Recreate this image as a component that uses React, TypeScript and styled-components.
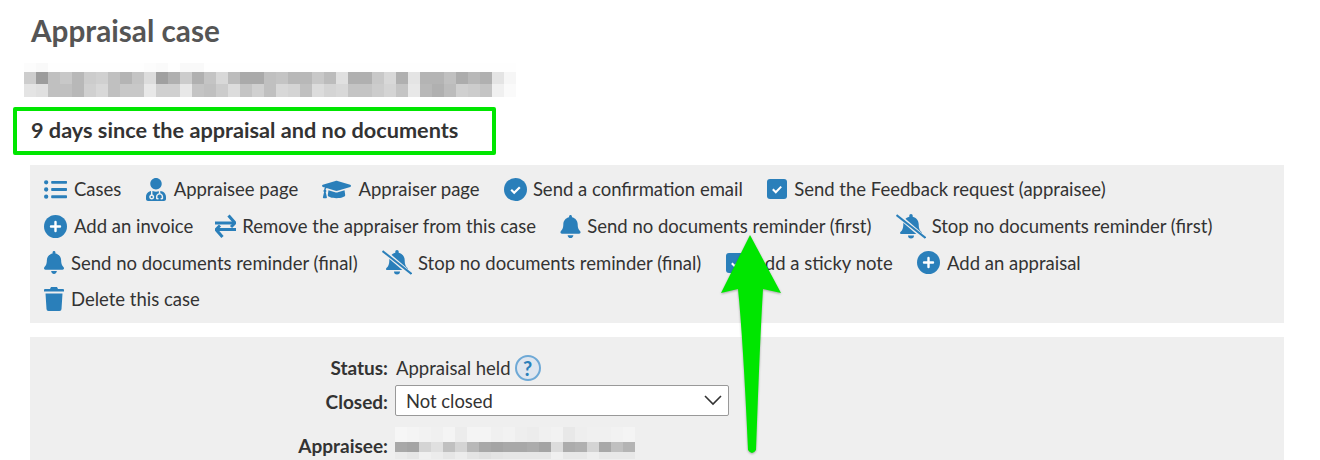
import React from "react";
import styled, { createGlobalStyle } from "styled-components";
import { FaListUl, FaUserMd, FaGraduationCap, FaBell } from "react-icons/fa";

const Global = createGlobalStyle`
  html, body { margin: 0; padding: 0; background: #fff; }
  body { width: 1320px; height: 460px; overflow: hidden; font-family: "Lato", "Liberation Sans", sans-serif; color: #333; }
`;

const Page = styled.div`
  position: relative;
  width: 1320px;
  height: 460px;
  overflow: hidden;
  padding: 0 36px 0 30px;
  box-sizing: border-box;
`;

const Title = styled.h1`
  margin: 0 0 0 1px;
  padding-top: 14px;
  font-size: 29.7px;
  line-height: 34px;
  font-weight: 700;
  color: #555;
`;

const Mosaic = styled.div`
  margin-left: -6px;
  margin-top: 15px;
`;

const Notice = styled.h2`
  position: relative;
  margin: 19px 0 0 1px;
  font-size: 21.7px;
  line-height: 28px;
  font-weight: 700;
  color: #333;
`;

const NoticeFrame = styled.span`
  position: absolute;
  left: -18px;
  top: -9px;
  width: 483px;
  height: 48px;
  box-sizing: border-box;
  border: 4px solid #00e600;
  border-radius: 2px;
`;

const Toolbar = styled.div`
  display: flex;
  flex-wrap: wrap;
  align-items: center;
  margin-top: 21px;
  padding: 6px 34px 5px 14px;
  background: #efefef;
`;

const Action = styled.a<{ $after: number }>`
  display: inline-flex;
  align-items: center;
  height: 36.7px;
  margin-right: ${(p) => p.$after}px;
  font-size: 18.5px;
  color: #333;
  white-space: nowrap;
`;

const IconSlot = styled.span<{ $w: number; $gap: number }>`
  display: inline-flex;
  align-items: center;
  justify-content: center;
  width: ${(p) => p.$w}px;
  margin-right: ${(p) => p.$gap}px;
  color: #2a7fba;
  font-size: 23px;
`;

const FormPanel = styled.div`
  margin-top: 14px;
  padding: 16px 0 0;
  height: 140px;
  background: #efefef;
  display: grid;
  grid-template-columns: 358px 1fr;
  column-gap: 8px;
  align-content: start;
`;

const Label = styled.div`
  text-align: right;
  font-size: 19px;
  font-weight: 700;
  line-height: 30px;
  color: #333;
`;

const ClosedLabel = styled(Label)`
  margin-top: 4px;
`;

const Value = styled.div`
  display: flex;
  align-items: center;
  font-size: 18.5px;
  line-height: 30px;
  height: 30px;
  color: #333;
`;

const Help = styled.span`
  display: inline-flex;
  align-items: center;
  justify-content: center;
  width: 26px;
  height: 26px;
  margin-left: 4px;
  box-sizing: border-box;
  border: 2px solid #6ea9d6;
  border-radius: 50%;
  background: #dfe6ef;
  color: #2a7fba;
  font-size: 20px;
  font-weight: 700;
`;

const SelectWrap = styled.div`
  position: relative;
  width: 334px;
  height: 31px;
  margin: 2px 0 0 -1px;
`;

const Select = styled.select`
  appearance: none;
  display: block;
  width: 100%;
  height: 100%;
  box-sizing: border-box;
  padding: 2px 10px 0;
  font: 18.4px "Lato", "Liberation Sans", sans-serif;
  color: #333;
  background: #fff;
  border: 1px solid #999;
  border-radius: 2px;
`;

const Chevron = styled.svg`
  position: absolute;
  right: 7px;
  top: 10px;
  pointer-events: none;
`;

const AppraiseeLabel = styled(Label)`
  margin-top: 14px;
`;

const AppraiseeValue = styled.div`
  margin-top: 10px;
  margin-left: -1px;
`;

const Arrow = styled.svg`
  position: absolute;
  left: 712px;
  top: 228px;
  filter: drop-shadow(0 1px 1px rgba(0, 0, 0, 0.3));
`;

const row1 = "cd 9c c0 c8 b8 cc d0 c0 b4 c4 dc a0 b0 cc b0 c4 d8 bc aa aa c0 c4 b8 b8 c8 bc e0 b0 b0 c8 d8 b0 e4 b4 b4 c0 ac b8 b0 e4 f6".split(" ");
const row2 = "e4 e0 c0 c0 b8 d0 d8 c0 c8 c8 e8 d0 d0 e8 c4 c0 cc dc c4 d0 c0 d8 d4 c0 dc d4 d8 c4 c4 cc d4 c4 e8 b8 b0 bc d0 cc c4 f0 fa".split(" ");
const row0 = "fc f9 fe fe fe fe fe fe fe fe fc fa fe f9 f9 fe fe fe fe fe fe fe fe fe fe fe fe fe fe fe fe fe fe fe fe fe fe fe fe fe fe".split(" ");

const app0 = "f6 f4 f2 f0 f4 ec f4 f4 f0 f2 ee ec f0 f2 e8 ee f0 f0 f2 f4".split(" ");
const app1 = "a8 a4 d4 e0 c0 d4 b8 a8 a4 a8 a8 ac a4 dc ac b0 d4 a8 c0 b4".split(" ");
const app2 = "ea e6 f0 ec e6 ec e4 e0 e4 e6 e6 e6 e6 f0 e8 e8 ee e8 e8 e8".split(" ");

function Cells({ rows, cell, heights }: { rows: string[][]; cell: number; heights: number[] }) {
  let y = 0;
  const h = heights.reduce((a, b) => a + b, 0);
  return (
    <svg width={rows[0].length * cell} height={h} style={{ display: "block" }} shapeRendering="crispEdges">
      {rows.map((r, i) => {
        const top = y;
        y += heights[i];
        return r.map((c, j) => <rect key={`${i}-${j}`} x={j * cell} y={top} width={cell} height={heights[i]} fill={`#${c}${c}${c}`} />);
      })}
    </svg>
  );
}

const CircleCheck = () => (
  <svg width="23" height="23" viewBox="0 0 23 23">
    <circle cx="11.5" cy="11.5" r="11.5" fill="currentColor" />
    <path d="M7.2 11.8l3 3 5.6-5.6" fill="none" stroke="#fff" strokeWidth="2.2" />
  </svg>
);

const CirclePlus = () => (
  <svg width="23" height="23" viewBox="0 0 23 23">
    <circle cx="11.5" cy="11.5" r="11.5" fill="currentColor" />
    <path d="M11.5 7v9M7 11.5h9" fill="none" stroke="#fff" strokeWidth="2.4" strokeLinecap="round" />
  </svg>
);

const SquareCheck = () => (
  <svg width="20" height="20" viewBox="0 0 20 20">
    <rect width="20" height="20" rx="3" fill="currentColor" />
    <path d="M5.8 10.2l3 3 5.4-5.6" fill="none" stroke="#fff" strokeWidth="2" />
  </svg>
);

const Exchange = () => (
  <svg width="21" height="24" viewBox="0 0 21 24" fill="none" stroke="currentColor" strokeWidth="3">
    <path d="M0 9h19" />
    <path d="M13.5 1.5L20 9l-4 4" />
    <path d="M21 15.5H2" />
    <path d="M7.5 23L1 15.5l4-4" />
  </svg>
);

const BellSlash = () => (
  <svg width="30" height="25" viewBox="0 0 30 25">
    <path
      d="M15 0c1 0 1.7.8 1.7 1.7v1c3.6.8 6 3.9 6 7.5 0 4.7 1.2 6.2 3 8 .5.5.4 1.8-.8 1.8H5.1c-1.2 0-1.3-1.3-.8-1.8 1.8-1.8 3-3.3 3-8 0-3.6 2.4-6.7 6-7.5v-1C13.3.8 14 0 15 0zM12 21.5h6a3 3 0 0 1-6 0z"
      fill="currentColor"
    />
    <path d="M1 0.5L29 24.5" stroke="#efefef" strokeWidth="4.5" />
    <path d="M0.5 1L29.5 24" stroke="currentColor" strokeWidth="2" />
  </svg>
);

const Trash = () => (
  <svg width="20" height="24" viewBox="0 0 20 24">
    <path d="M7 0h6l1 2h5a1 1 0 0 1 1 1v1.5H0V3a1 1 0 0 1 1-1h5z" fill="currentColor" />
    <path d="M1.5 6.5h17L17.5 22a2 2 0 0 1-2 2h-11a2 2 0 0 1-2-2z" fill="currentColor" />
  </svg>
);

const actions: { icon: React.ReactNode; w: number; gap: number; after?: number; text: string }[] = [
  { icon: <FaListUl />, w: 23, gap: 7, text: "Cases" },
  { icon: <FaUserMd />, w: 20, gap: 8, text: "Appraisee page" },
  { icon: <FaGraduationCap size={29} />, w: 29, gap: 7, text: "Appraiser page" },
  { icon: <CircleCheck />, w: 23, gap: 6, text: "Send a confirmation email" },
  { icon: <SquareCheck />, w: 20, gap: 7, text: "Send the Feedback request (appraisee)" },
  { icon: <CirclePlus />, w: 23, gap: 7, after: 22, text: "Add an invoice" },
  { icon: <Exchange />, w: 21, gap: 6, text: "Remove the appraiser from this case" },
  { icon: <FaBell />, w: 21, gap: 6, text: "Send no documents reminder (first)" },
  { icon: <BellSlash />, w: 30, gap: 6, text: "Stop no documents reminder (first)" },
  { icon: <FaBell />, w: 20, gap: 7, text: "Send no documents reminder (final)" },
  { icon: <BellSlash />, w: 30, gap: 6, text: "Stop no documents reminder (final)" },
  { icon: <SquareCheck />, w: 20, gap: 7, text: "Add a sticky note" },
  { icon: <CirclePlus />, w: 23, gap: 7, text: "Add an appraisal" },
  { icon: <Trash />, w: 20, gap: 7, text: "Delete this case" },
];

export default function App() {
  return (
    <Page>
      <Global />
      <Title>Appraisal case</Title>
      <Mosaic>
        <Cells rows={[row0, row1, row2]} cell={12} heights={[9, 12, 13]} />
      </Mosaic>
      <Notice>
        9 days since the appraisal and no documents
        <NoticeFrame />
      </Notice>
      <Toolbar>
        {actions.map((a) => (
          <Action key={a.text} $after={a.after ?? 24.3}>
            <IconSlot $w={a.w} $gap={a.gap}>{a.icon}</IconSlot>
            {a.text}
          </Action>
        ))}
      </Toolbar>
      <FormPanel>
        <Label>Status:</Label>
        <Value>
          Appraisal held
          <Help>?</Help>
        </Value>
        <ClosedLabel>Closed:</ClosedLabel>
        <SelectWrap>
          <Select defaultValue="Not closed">
            <option>Not closed</option>
          </Select>
          <Chevron width="18" height="11" viewBox="0 0 18 11" fill="none" stroke="#333" strokeWidth="1.6">
            <path d="M1 1l8 8 8-8" />
          </Chevron>
        </SelectWrap>
        <AppraiseeLabel>Appraisee:</AppraiseeLabel>
        <AppraiseeValue>
          <Cells rows={[app0, app1, app2]} cell={12} heights={[15, 10, 7]} />
        </AppraiseeValue>
      </FormPanel>
      <Arrow width="80" height="232" viewBox="0 0 80 232">
        <path d="M38 7 L69 65 L51 61 Q48 110 44 222 Q40 228 36 222 Q31 110 26 61 L9 65 Z" fill="#00e600" />
      </Arrow>
    </Page>
  );
}
